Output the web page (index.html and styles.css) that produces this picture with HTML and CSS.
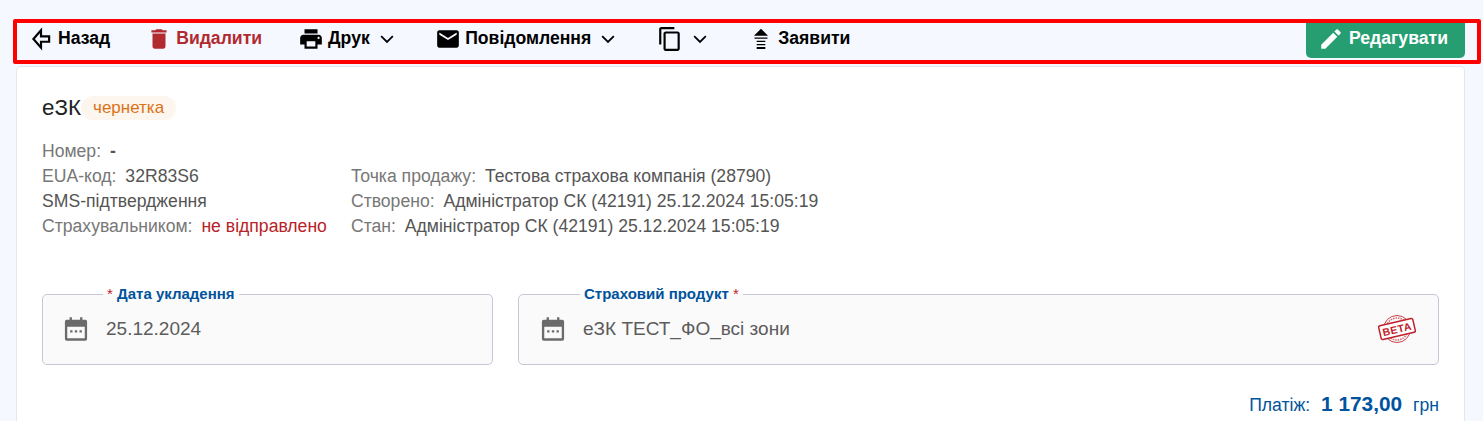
FILE: index.html
```html
<!DOCTYPE html>
<html lang="uk">
<head>
  <meta charset="UTF-8" />
  <meta name="viewport" content="width=device-width, initial-scale=1.0" />
  <title>еЗК</title>
  <link rel="stylesheet" href="styles.css">
</head>
<body>
  <div class="highlight"></div>

  <nav class="toolbar">
    <a class="tool" href="#">
      <svg class="icon" viewBox="0 0 24 24"><path d="M12 4 5 12l7 8v-5.500h7.500v-5H12z" fill="none" stroke="#000" stroke-width="2"/></svg>
      Назад
    </a>
    <a class="tool tool-danger" href="#">
      <svg class="icon" viewBox="0 0 24 24"><path d="M6 19c0 1.100.9 2 2 2h8c1.100 0 2-.9 2-2V7H6zM19 4h-3.500l-1-1h-5l-1 1H5v2h14z" fill="#b02a30"/></svg>
      Видалити
    </a>
    <a class="tool" href="#">
      <svg class="icon" viewBox="0 0 24 24"><path d="M19 8H5c-1.660 0-3 1.340-3 3v6h4v4h12v-4h4v-6c0-1.660-1.340-3-3-3zm-3 11H8v-5h8zm3-7c-.55 0-1-.45-1-1s.45-1 1-1 1 .45 1 1-.45 1-1 1zm-1-9H6v4h12z"/></svg>
      Друк
      <svg class="chevron" viewBox="0 0 24 24"><path d="M5 8.500l7 7 7-7" fill="none" stroke="#000" stroke-width="2.200"/></svg>
    </a>
    <a class="tool" href="#">
      <svg class="icon" viewBox="0 0 24 24"><path d="M20 4H4c-1.100 0-2 .9-2 2v12c0 1.100.9 2 2 2h16c1.100 0 2-.9 2-2V6c0-1.100-.9-2-2-2zm0 4-8 5-8-5V6l8 5 8-5z"/></svg>
      Повідомлення
      <svg class="chevron" viewBox="0 0 24 24"><path d="M5 8.500l7 7 7-7" fill="none" stroke="#000" stroke-width="2.200"/></svg>
    </a>
    <a class="tool" href="#">
      <svg class="icon" viewBox="0 0 24 24"><path d="M16 1H4c-1.100 0-2 .9-2 2v14h2V3h12zm3 4H8c-1.100 0-2 .9-2 2v14c0 1.100.9 2 2 2h11c1.100 0 2-.9 2-2V7c0-1.100-.9-2-2-2zm0 16H8V7h11z"/></svg>
      <svg class="chevron" viewBox="0 0 24 24"><path d="M5 8.500l7 7 7-7" fill="none" stroke="#000" stroke-width="2.200"/></svg>
    </a>
    <a class="tool" href="#">
      <svg class="icon" viewBox="0 0 24 24"><path d="M12 2.500 18.500 9h-13zM6 10.500h12v1.300H6zM8 13.500h8v1.300H8zM8 16.500h8v1.300H8zM8 19.300h8v2H8z"/></svg>
      Заявити
    </a>
    <button class="edit-button" type="button">
      <svg class="icon" viewBox="0 0 24 24"><path d="M3 17.250V21h3.750L17.810 9.940l-3.750-3.750zM20.710 7.040a1 1 0 0 0 0-1.410l-2.340-2.340a1 1 0 0 0-1.410 0l-1.830 1.830 3.750 3.750z" fill="#fff"/></svg>
      Редагувати
    </button>
  </nav>

  <main class="card">
    <h1 class="title">еЗК<span class="badge">чернетка</span></h1>

    <div class="info">
      <div class="info-col">
        <p><span class="label">Номер:</span> <b class="dash">-</b></p>
        <p><span class="label">EUA-код:</span> 32R83S6</p>
        <p>SMS-підтвердження</p>
        <p><span class="label">Страхувальником:</span> <span class="alert">не відправлено</span></p>
      </div>
      <div class="info-col">
        <p>&nbsp;</p>
        <p><span class="label">Точка продажу:</span> Тестова страхова компанія (28790)</p>
        <p><span class="label">Створено:</span> Адміністратор СК (42191) 25.12.2024 15:05:19</p>
        <p><span class="label">Стан:</span> Адміністратор СК (42191) 25.12.2024 15:05:19</p>
      </div>
    </div>

    <div class="fields">
      <fieldset class="field field-date">
        <legend><i>*</i> Дата укладення</legend>
        <svg class="cal" viewBox="0 0 24 24"><path d="M4 4h2.500V2h2v2h7V2h2v2H20a1.500 1.500 0 0 1 1.500 1.500v15A1.500 1.500 0 0 1 20 22H4a1.500 1.500 0 0 1-1.500-1.500v-15A1.500 1.500 0 0 1 4 4zm.5 6v10h15V10zM7 13h2v2H7zm4 0h2v2h-2zm4 0h2v2h-2z" fill="#6b6b6b" fill-rule="evenodd"/></svg>
        <span class="value">25.12.2024</span>
      </fieldset>
      <fieldset class="field field-product">
        <legend>Страховий продукт <i>*</i></legend>
        <svg class="cal" viewBox="0 0 24 24"><path d="M4 4h2.500V2h2v2h7V2h2v2H20a1.500 1.500 0 0 1 1.500 1.500v15A1.500 1.500 0 0 1 20 22H4a1.500 1.500 0 0 1-1.500-1.500v-15A1.500 1.500 0 0 1 4 4zm.5 6v10h15V10zM7 13h2v2H7zm4 0h2v2h-2zm4 0h2v2h-2z" fill="#6b6b6b" fill-rule="evenodd"/></svg>
        <span class="value">еЗК ТЕСТ_ФО_всі зони</span>
        <svg class="beta" viewBox="0 0 38 30">
          <circle cx="19" cy="15" r="13.500" fill="none" stroke="#c8434b" stroke-width="1"/>
          <circle cx="19" cy="15" r="11" fill="none" stroke="#d4686e" stroke-width="1.500" stroke-dasharray="1.500 1"/>
          <g transform="rotate(-13 19 15)">
            <rect x="1.500" y="8" width="35" height="14" rx="1.500" fill="#fff" stroke="#c0202a" stroke-width="1.500"/>
            <text x="19" y="19" text-anchor="middle" class="beta-text">BETA</text>
          </g>
        </svg>
      </fieldset>
    </div>

    <div class="payment">
      <span>Платіж:</span>
      <b class="pay-sum">1 173,00</b>
      <span>грн</span>
    </div>
  </main>
</body>
</html>
```

FILE: styles.css
```css
html, body {
  height: 421px;
}

body {
  background-color: #f5f8ff;
  color: #555;
  font-family: 'Liberation Sans', Arial, sans-serif;
  font-size: 17.6px;
  margin: 0;
  padding: 19px 18px 0 16px;
  box-sizing: border-box;
  position: relative;
  overflow: hidden;
}

/* red frame drawn over the toolbar */
.highlight {
  position: absolute;
  left: 13px;
  top: 19px;
  width: 1460px;
  height: 37px;
  border: 4px solid #f00;
  border-radius: 2px;
  z-index: 2;
}

.toolbar {
  display: flex;
  align-items: center;
  gap: 36px;
  height: 39px;
  padding: 0 0 0 12px;
  margin-bottom: 8px;
}

.tool {
  display: flex;
  align-items: center;
  gap: 4px;
  color: #000;
  font-weight: bold;
  font-size: 17.6px;
  text-decoration: none;
}

.tool-danger {
  color: #b02a30;
}

.icon {
  width: 26px;
  height: 26px;
  flex: none;
}

.chevron {
  width: 20px;
  height: 20px;
  margin: 0 2.5px 0 3px;
}

.edit-button {
  display: flex;
  align-items: center;
  gap: 5px;
  margin-left: auto;
  height: 39px;
  width: 159px;
  padding: 0 0 0 12px;
  background-color: #279e72;
  color: white;
  border: none;
  border-radius: 0 0 5px 5px;
  font-family: inherit;
  font-weight: bold;
  font-size: 17.6px;
}

.card {
  box-sizing: border-box;
  background-color: white;
  border: 1px solid #e4e6ee;
  border-bottom: none;
  border-radius: 5px 5px 0 0;
  height: 355px;
  padding: 27px 25px 0;
}

.title {
  display: flex;
  align-items: center;
  margin: 0;
  font-size: 22.4px;
  font-weight: normal;
  color: #222;
  height: 28px;
}

.badge {
  padding: 0 12px;
  height: 24px;
  line-height: 24px;
  border-radius: 12px;
  background-color: #fdf6ee;
  color: #dc7216;
  font-size: 17px;
}

.info {
  display: flex;
  margin-top: 17px;
}

.info-col {
  margin-right: 24px;
}

.info-col p {
  margin: 0;
  line-height: 25px;
  white-space: nowrap;
}

.label {
  color: #777;
  margin-right: 4px;
}

.dash {
  color: #555;
}

.alert {
  color: #b82228;
}

.fields {
  display: flex;
  gap: 25px;
  margin-top: 47px;
}

.field {
  display: flex;
  align-items: center;
  box-sizing: border-box;
  margin: 0;
  height: 79px;
  padding: 0 19px 9px;
  background-color: #fafafa;
  border: 1px solid #c6c6d6;
  border-radius: 5px;
}

.field-date {
  width: 451px;
  flex: none;
}

.field-product {
  flex: 1;
  padding-left: 20px;
}

.field legend {
  margin-left: 41px;
  padding: 0 4px;
  font-size: 15px;
  font-weight: bold;
  color: #00539c;
  line-height: 16px;
}

.field legend i {
  color: #c0202a;
  font-style: normal;
  font-weight: normal;
}

.cal {
  width: 28px;
  height: 28px;
  flex: none;
  margin-right: 16px;
}

.value {
  font-size: 19px;
  color: #5c5c5c;
}

.beta {
  width: 38px;
  height: 30px;
  margin-left: auto;
  margin-right: 3px;
}

.beta-text {
  font-family: 'Liberation Sans', Arial, sans-serif;
  font-size: 10.5px;
  font-weight: bold;
  letter-spacing: 0.5px;
  fill: #c0202a;
}

.payment {
  display: flex;
  justify-content: flex-end;
  align-items: baseline;
  gap: 11px;
  margin-top: 27px;
  color: #00539c;
}

.pay-sum {
  font-size: 20.8px;
}
```
